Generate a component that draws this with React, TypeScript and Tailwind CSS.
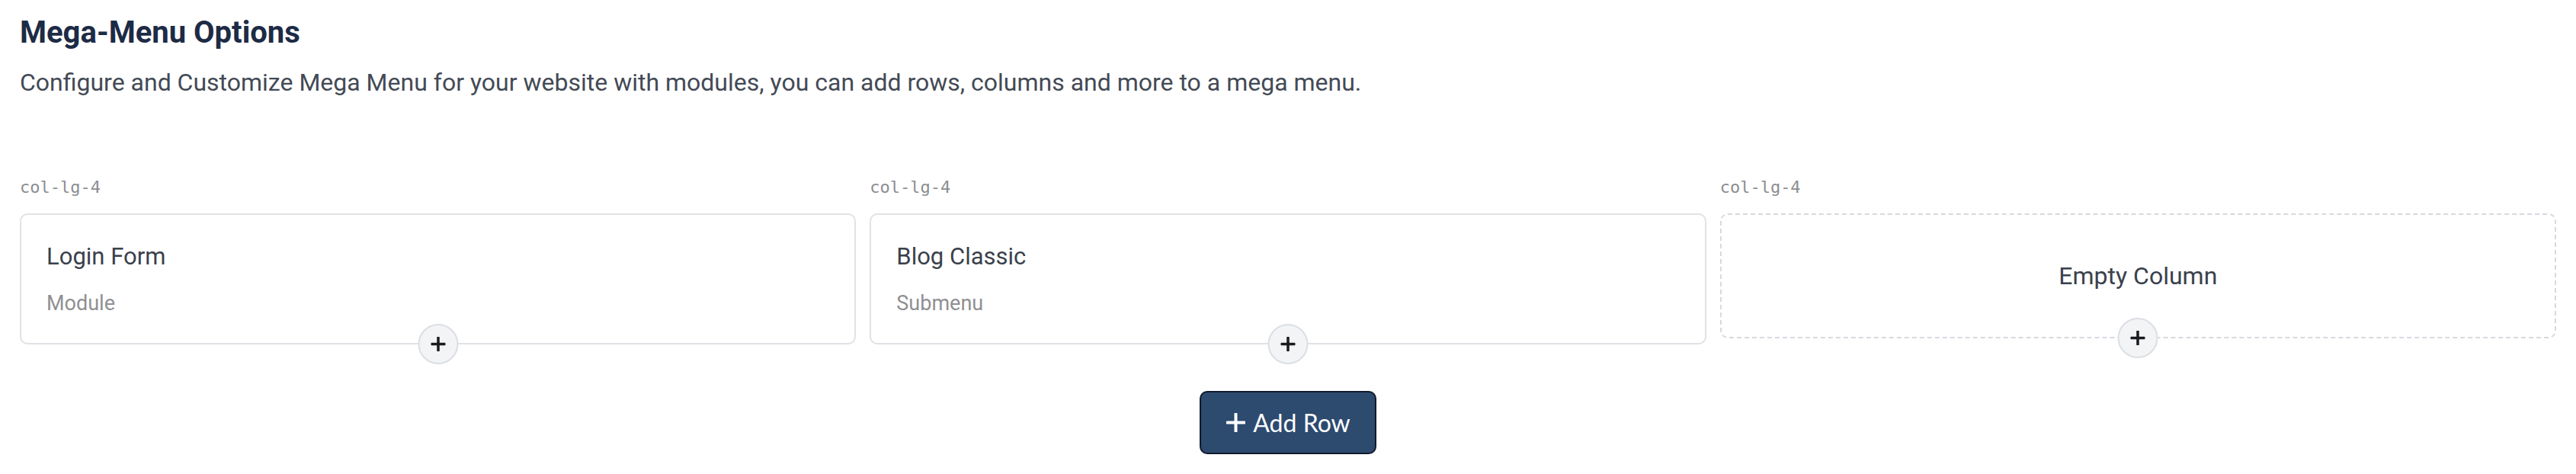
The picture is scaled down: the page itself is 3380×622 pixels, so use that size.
import React from "react";

function PlusIcon({ size, stroke, color }: { size: number; stroke: number; color: string }) {
  return (
    <svg width={size} height={size} viewBox={`0 0 ${size} ${size}`} fill="none">
      <line x1={size / 2} y1={1} x2={size / 2} y2={size - 1} stroke={color} strokeWidth={stroke} strokeLinecap="round" />
      <line x1={1} y1={size / 2} x2={size - 1} y2={size / 2} stroke={color} strokeWidth={stroke} strokeLinecap="round" />
    </svg>
  );
}

function AddCircle({ bottom }: { bottom: string }) {
  return (
    <div
      className={`absolute left-1/2 -translate-x-1/2 ${bottom} w-[53px] h-[53px] rounded-full bg-[#f3f4f6] border-2 border-[#dcdee3] flex items-center justify-center`}
    >
      <PlusIcon size={19} stroke={3.5} color="#1b1b1f" />
    </div>
  );
}

function Label() {
  return (
    <div className="font-['DejaVu_Sans_Mono',monospace] text-[22px] leading-[32px] text-[#8b8d91] mb-[18px]">
      col-lg-4
    </div>
  );
}

function ModuleCard({ title, sub }: { title: string; sub: string }) {
  return (
    <div className="relative h-[172px] rounded-[10px] border-2 border-[#e1e2e6] bg-white pl-[33px] pt-[37px]">
      <div className="text-[31px] leading-[36px] text-[#3a414c]">{title}</div>
      <div className="mt-[27px] text-[27px] leading-[32px] text-[#8f9092]">{sub}</div>
      <AddCircle bottom="bottom-[-28px]" />
    </div>
  );
}

export default function App() {
  return (
    <div className="min-h-[622px] bg-white px-[26px] pt-[20px] font-['Roboto','Noto_Sans',sans-serif]">
      <h1 className="text-[40px] leading-[46px] font-bold text-[#1d2b45]">Mega-Menu Options</h1>
      <p className="mt-[18px] text-[32px] leading-[48px] text-[#434a55]">
        Configure and Customize Mega Menu for your website with modules, you can add rows, columns and more to a mega menu.
      </p>

      <div className="mt-[98px] grid grid-cols-3 gap-[18px]">
        <div>
          <Label />
          <ModuleCard title="Login Form" sub="Module" />
        </div>
        <div>
          <Label />
          <ModuleCard title="Blog Classic" sub="Submenu" />
        </div>
        <div>
          <Label />
          <div className="relative h-[164px] rounded-[10px] border-2 border-dashed border-[#d6d9de] bg-white flex items-center justify-center">
            <div className="text-[32px] leading-[36px] text-[#3a414c]">Empty Column</div>
            <AddCircle bottom="bottom-[-28px]" />
          </div>
        </div>
      </div>

      <div className="mt-[61px] flex justify-center">
        <button className="flex items-center gap-[10px] h-[83px] rounded-[10px] border-2 border-[#101b2c] bg-[#2d4a6f] pl-[33px] pr-[32px] font-['Lato',sans-serif] text-[32px] text-white">
          <PlusIcon size={25} stroke={4} color="#ffffff" />
          <span>Add Row</span>
        </button>
      </div>
    </div>
  );
}
